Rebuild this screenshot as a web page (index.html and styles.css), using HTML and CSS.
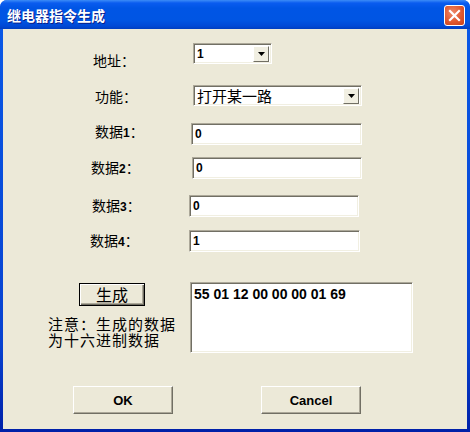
FILE: index.html
```html
<!DOCTYPE html>
<html lang="zh">
<head>
<meta charset="utf-8">
<title>继电器指令生成</title>
<link rel="stylesheet" href="styles.css">
</head>
<body>
<div class="window">
  <div class="titlebar">
    <span class="title">继电器指令生成</span>
    <span class="close"><svg width="13" height="13" viewBox="0 0 13 13"><path d="M2 2 L11 11 M11 2 L2 11" stroke="#fff" stroke-width="2.2" stroke-linecap="square"/></svg></span>
  </div>
  <div class="client">
    <div class="form">
      <div class="row r1"><span class="label">地址：</span><div class="field combo"><span class="val bold">1</span><span class="drop"><svg width="7" height="4" viewBox="0 0 7 4"><path d="M0 0 H7 L3.5 4 Z" fill="#000"/></svg></span></div></div>
      <div class="row r2"><span class="label">功能：</span><div class="field combo"><span class="val cjk">打开某一路</span><span class="drop"><svg width="7" height="4" viewBox="0 0 7 4"><path d="M0 0 H7 L3.5 4 Z" fill="#000"/></svg></span></div></div>
      <div class="row r3"><span class="label">数据<b>1</b>：</span><div class="field"><span class="val bold">0</span></div></div>
      <div class="row r4"><span class="label">数据<b>2</b>：</span><div class="field"><span class="val bold">0</span></div></div>
      <div class="row r5"><span class="label">数据<b>3</b>：</span><div class="field"><span class="val bold">0</span></div></div>
      <div class="row r6"><span class="label">数据<b>4</b>：</span><div class="field"><span class="val bold">1</span></div></div>
    </div>
    <div class="gen">
      <div class="gen-left">
        <button class="btn btn-gen">生成</button>
        <p class="note">注意：生成的数据<br>为十六进制数据</p>
      </div>
      <div class="output">55 01 12 00 00 00 01 69</div>
    </div>
    <div class="actions">
      <button class="btn btn-ok">OK</button>
      <button class="btn btn-cancel">Cancel</button>
    </div>
  </div>
</div>
</body>
</html>
```

FILE: styles.css
```css
html, body {
  margin: 0;
  padding: 0;
  background: #ffffff;
}
.window {
  width: 470px;
  height: 432px;
  box-sizing: border-box;
  display: flex;
  flex-direction: column;
  background: linear-gradient(to bottom, #0A5AE8 0%, #0842D0 80%, #0020A8 100%);
  border-radius: 7px 7px 0 0;
  overflow: hidden;
}
.titlebar {
  height: 29px;
  flex: none;
  display: flex;
  align-items: center;
  justify-content: space-between;
  padding: 0 5px 0 7px;
  background: linear-gradient(to bottom, #3C8CF7 0px, #0A5CEF 3px, #0055E5 8px, #0055E3 20px, #0049D6 26px, #003EC0 29px);
}
.title {
  font-family: "Noto Sans CJK SC", sans-serif;
  font-weight: 700;
  font-size: 14px;
  line-height: 16px;
  color: #ffffff;
  text-shadow: 1px 1px 0 #0A1E8A;
  margin-top: 1px;
}
.close {
  width: 21px;
  height: 21px;
  box-sizing: border-box;
  border: 1px solid #ffffff;
  border-radius: 3px;
  background: radial-gradient(circle at 40% 35%, #EE8A6A 0%, #E0582F 55%, #C6401A 100%);
  display: flex;
  align-items: center;
  justify-content: center;
  margin-top: 2px;
}
.client {
  flex: 1;
  margin: 0 3px 3px 3px;
  background: #ECE9D8;
  display: flex;
  flex-direction: column;
}
.form {
  display: flex;
  flex-direction: column;
}
.row {
  display: flex;
  align-items: center;
}
.label {
  box-sizing: border-box;
  font-family: "Noto Sans CJK SC", sans-serif;
  font-size: 14px;
  line-height: 16px;
  color: #000;
  white-space: nowrap;
}
.label b {
  font-family: "Liberation Sans", sans-serif;
  font-size: 12px;
  font-weight: 700;
}
.field {
  box-sizing: border-box;
  height: 22px;
  background: #ffffff;
  border: 1px solid;
  border-color: #ACA899 #FFFFFF #FFFFFF #ACA899;
  box-shadow: inset 1px 1px 0 #716F64, inset -1px -1px 0 #F1EFE2;
  display: flex;
  align-items: center;
  padding: 0 2px 0 3px;
}
.val {
  flex: 1;
  color: #000;
  white-space: nowrap;
}
.bold {
  font-family: "Liberation Sans", sans-serif;
  font-weight: 700;
  font-size: 12px;
}
.cjk {
  font-family: "Noto Sans CJK SC", sans-serif;
  font-size: 15px;
  line-height: 17px;
}
.drop {
  width: 16px;
  height: 16px;
  box-sizing: border-box;
  background: #F1EFE2;
  border: 1px solid;
  border-color: #FFFFFF #716F64 #716F64 #FFFFFF;
  display: flex;
  align-items: center;
  justify-content: center;
}
.r1 { margin-top: 14px; }
.r1 .label { width: 190px; padding-left: 90px; margin-top: 6px; margin-bottom: -6px; }
.r1 .field { width: 79px; height: 21px; }
.r2 { margin-top: 21px; }
.r2 .label { width: 190px; padding-left: 92px; }
.r2 .field { width: 169px; height: 21px; }
.r3 { margin-top: 17px; }
.r3 .label { width: 188px; padding-left: 92px; margin-top: -2px; margin-bottom: 2px; }
.r3 .field { width: 171px; }
.r4 { margin-top: 12px; }
.r4 .label { width: 189px; padding-left: 88px; }
.r4 .field { width: 170px; }
.r5 { margin-top: 16px; }
.r5 .label { width: 186px; padding-left: 89px; }
.r5 .field { width: 170px; }
.r6 { margin-top: 13px; }
.r6 .label { width: 186px; padding-left: 87px; }
.r6 .field { width: 171px; }
.gen {
  display: flex;
  margin-top: 30px;
}
.gen-left {
  width: 187px;
  display: flex;
  flex-direction: column;
}
.btn {
  box-sizing: border-box;
  margin: 0;
  padding: 0;
  background: #ECE9D8;
  color: #000;
  border: 1px solid;
  border-color: #FFFFFF #716F64 #716F64 #FFFFFF;
  box-shadow: inset -1px -1px 0 #ACA899;
  display: flex;
  align-items: center;
  justify-content: center;
}
.btn-gen {
  width: 66px;
  height: 23px;
  margin: 1px 0 0 76px;
  border: 1px solid #000;
  box-shadow: inset 1px 1px 0 #FFFFFF, inset -1px -1px 0 #716F64, inset -2px -2px 0 #ACA899;
  font-family: "Noto Sans CJK SC", sans-serif;
  font-size: 16px;
  line-height: 18px;
  padding-bottom: 2px;
}
.note {
  margin: 10px 0 0 45px;
  font-family: "Noto Sans CJK SC", sans-serif;
  font-size: 15px;
  letter-spacing: 1px;
  line-height: 16px;
  color: #000;
  white-space: nowrap;
}
.output {
  box-sizing: border-box;
  width: 223px;
  height: 71px;
  background: #ffffff;
  border: 1px solid;
  border-color: #ACA899 #FFFFFF #FFFFFF #ACA899;
  box-shadow: inset 1px 1px 0 #716F64, inset -1px -1px 0 #F1EFE2;
  padding: 3px 0 0 3px;
  font-family: "Liberation Sans", sans-serif;
  font-weight: 700;
  font-size: 14px;
  line-height: 16px;
  color: #000;
}
.actions {
  display: flex;
  margin-top: 33px;
}
.btn-ok, .btn-cancel {
  width: 100px;
  height: 28px;
  font-family: "Liberation Sans", sans-serif;
  font-weight: 700;
  font-size: 13px;
}
.btn-ok { margin-left: 70px; }
.btn-cancel { margin-left: 88px; }
```
